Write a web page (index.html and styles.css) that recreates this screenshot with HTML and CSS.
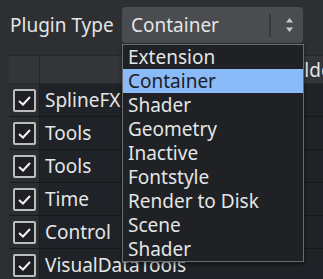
FILE: index.html
```html
<!DOCTYPE html>
<html lang="en">

<head>
  <meta charset="UTF-8" />
  <title>Plugin Type</title>
  <link rel="stylesheet" href="styles.css">
</head>

<body>

  <div class="toolbar">
    <span class="label">Plugin Type</span>
    <div class="combo">
      <span class="combo-value">Container</span>
      <span class="combo-sep"></span>
      <svg class="combo-arrows" width="9" height="16" viewBox="0 0 9 16">
        <path d="M4.5 1 L8 5.5 L1 5.5 Z" fill="#c9cacb" />
        <path d="M1 10.5 L8 10.5 L4.5 15 Z" fill="#c9cacb" />
      </svg>

      <!-- open popup list -->
      <ul class="combo-list">
        <li>Extension</li>
        <li class="selected">Container</li>
        <li>Shader</li>
        <li>Geometry</li>
        <li>Inactive</li>
        <li>Fontstyle</li>
        <li>Render to Disk</li>
        <li>Scene</li>
        <li>Shader</li>
      </ul>
    </div>
  </div>

  <div class="plugin-table">
    <div class="row header">
      <div class="cell check"></div>
      <div class="cell name"></div>
      <div class="cell folder">Folder</div>
    </div>
    <div class="row">
      <div class="cell check"><span class="checkbox"><svg viewBox="0 0 19 19"><path d="M4 10 L8 13.5 L15 6" /></svg></span></div>
      <div class="cell name">SplineFX</div>
      <div class="cell folder"></div>
    </div>
    <div class="row">
      <div class="cell check"><span class="checkbox"><svg viewBox="0 0 19 19"><path d="M4 10 L8 13.5 L15 6" /></svg></span></div>
      <div class="cell name">Tools</div>
      <div class="cell folder"></div>
    </div>
    <div class="row">
      <div class="cell check"><span class="checkbox"><svg viewBox="0 0 19 19"><path d="M4 10 L8 13.5 L15 6" /></svg></span></div>
      <div class="cell name">Tools</div>
      <div class="cell folder"></div>
    </div>
    <div class="row">
      <div class="cell check"><span class="checkbox"><svg viewBox="0 0 19 19"><path d="M4 10 L8 13.5 L15 6" /></svg></span></div>
      <div class="cell name">Time</div>
      <div class="cell folder"></div>
    </div>
    <div class="row">
      <div class="cell check"><span class="checkbox"><svg viewBox="0 0 19 19"><path d="M4 10 L8 13.5 L15 6" /></svg></span></div>
      <div class="cell name">Control</div>
      <div class="cell folder"></div>
    </div>
    <div class="row">
      <div class="cell check"><span class="checkbox"><svg viewBox="0 0 19 19"><path d="M4 10 L8 13.5 L15 6" /></svg></span></div>
      <div class="cell name">VisualDataTools</div>
      <div class="cell folder"></div>
    </div>
  </div>

</body>
</html>
```

FILE: styles.css
```css
* {
  box-sizing: border-box;
  font-family: 'Noto Sans', sans-serif;
}

body {
  margin: 0;
  background: #2d2f32;
  color: #e4e5e6;
  font-size: 19px;
  overflow: hidden;
}

.toolbar {
  display: flex;
  align-items: center;
  padding: 7px 0 0 10px;
}

.label {
  width: 112px;
  white-space: nowrap;
}

.combo {
  position: relative;
  display: flex;
  align-items: center;
  width: 181px;
  height: 36px;
  padding-left: 9px;
  background: #4a4c4f;
  border-radius: 4px;
}

.combo-value {
  flex: 1;
}

.combo-sep {
  width: 2px;
  height: 23px;
  background: #36383b;
  margin-right: 14px;
}

.combo-arrows {
  margin-right: 9px;
}

.combo-list {
  position: absolute;
  top: 37px;
  left: 0;
  width: 182px;
  margin: 0;
  padding: 0;
  list-style: none;
  background: #1f2125;
  border: 1px solid #6a6d70;
  box-shadow: 0 2px 4px rgba(0, 0, 0, 0.45);
  z-index: 2;
}

.combo-list li {
  height: 24px;
  line-height: 24px;
  padding-left: 5px;
  white-space: nowrap;
}

.combo-list li.selected {
  background: #8bbaf8;
  color: #1e2024;
}

.plugin-table {
  margin: 12px 0 0 9px;
}

.row {
  display: flex;
  height: 33px;
  border-bottom: 1px solid #17191c;
  background: #1f2226;
}

.row.header {
  height: 29px;
  border-top: 1px solid #26282b;
  border-bottom: 1px solid #26282b;
  background: #333538;
}

.cell {
  display: flex;
  align-items: center;
  white-space: nowrap;
}

.cell.check {
  flex-shrink: 0;
  width: 31px;
  padding-left: 4px;
  background: #2b2d30;
  border-right: 1px solid #1b1d20;
}

.row.header .cell.check {
  background: #333538;
  border-right-color: #26282b;
}

.cell.name {
  flex-shrink: 0;
  width: 240px;
  padding-left: 5px;
}

.cell.folder {
  flex: 1;
  min-width: 0;
  overflow: hidden;
  padding-left: 3px;
}

.checkbox {
  display: flex;
  width: 23px;
  height: 23px;
  padding: 0;
  border: 2px solid #bcbdbe;
  border-radius: 2px;
  background: #1e2023;
}

.checkbox svg {
  width: 19px;
  height: 19px;
  fill: none;
  stroke: #f2f2f2;
  stroke-width: 2;
}
```
